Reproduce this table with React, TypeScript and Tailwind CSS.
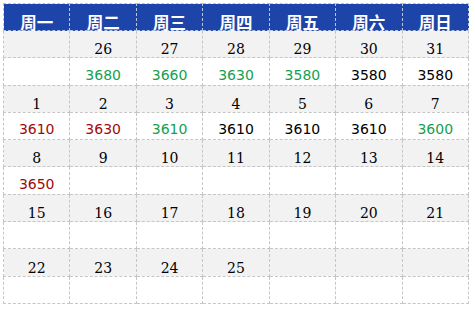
import React from 'react';

type Tone = 'g' | 'r' | 'k';

interface Week {
  days: (number | null)[];
  values: ([number, Tone] | null)[];
}

const heads = ['周一', '周二', '周三', '周四', '周五', '周六', '周日'];

const weeks: Week[] = [
  {
    days: [null, 26, 27, 28, 29, 30, 31],
    values: [null, [3680, 'g'], [3660, 'g'], [3630, 'g'], [3580, 'g'], [3580, 'k'], [3580, 'k']],
  },
  {
    days: [1, 2, 3, 4, 5, 6, 7],
    values: [[3610, 'r'], [3630, 'r'], [3610, 'g'], [3610, 'k'], [3610, 'k'], [3610, 'k'], [3600, 'g']],
  },
  {
    days: [8, 9, 10, 11, 12, 13, 14],
    values: [[3650, 'r'], null, null, null, null, null, null],
  },
  {
    days: [15, 16, 17, 18, 19, 20, 21],
    values: [null, null, null, null, null, null, null],
  },
  {
    days: [22, 23, 24, 25, null, null, null],
    values: [null, null, null, null, null, null, null],
  },
];

const toneClass: Record<Tone, string> = {
  g: 'text-[#14a050]',
  r: 'text-[#a00a0a]',
  k: 'text-black',
};

const App: React.FC = () => {
  return (
    <div className="w-[475px] h-[309px] bg-white pt-[3px] pl-[3px]">
      <table className="table-fixed border-collapse w-[466px]">
        <thead>
          <tr className="h-[27px]">
            {heads.map((h) => (
              <th
                key={h}
                className="bg-[#1d45a9] border border-dashed border-[#b8c4dc] text-white text-[16.5px] font-bold leading-none align-bottom pb-0 font-['Noto_Sans_CJK_SC',sans-serif]"
              >
                {h}
              </th>
            ))}
          </tr>
        </thead>
        <tbody>
          {weeks.map((w, i) => (
            <React.Fragment key={i}>
              <tr className="h-[27.3px] bg-[#f2f2f2]">
                {w.days.map((d, j) => (
                  <td
                    key={j}
                    className="border border-dashed border-[#c6c6c6] text-center align-bottom pb-[1px] text-[14px] leading-none text-black font-['DejaVu_Serif',serif]"
                  >
                    {d ?? ''}
                  </td>
                ))}
              </tr>
              <tr className="h-[27.3px] bg-white">
                {w.values.map((v, j) => (
                  <td
                    key={j}
                    className={`border border-dashed border-[#c6c6c6] text-center align-bottom pb-[3px] text-[14px] leading-none font-['DejaVu_Sans',sans-serif] ${v ? toneClass[v[1]] : ''}`}
                  >
                    {v ? v[0] : ''}
                  </td>
                ))}
              </tr>
            </React.Fragment>
          ))}
        </tbody>
      </table>
    </div>
  );
};

export default App;
